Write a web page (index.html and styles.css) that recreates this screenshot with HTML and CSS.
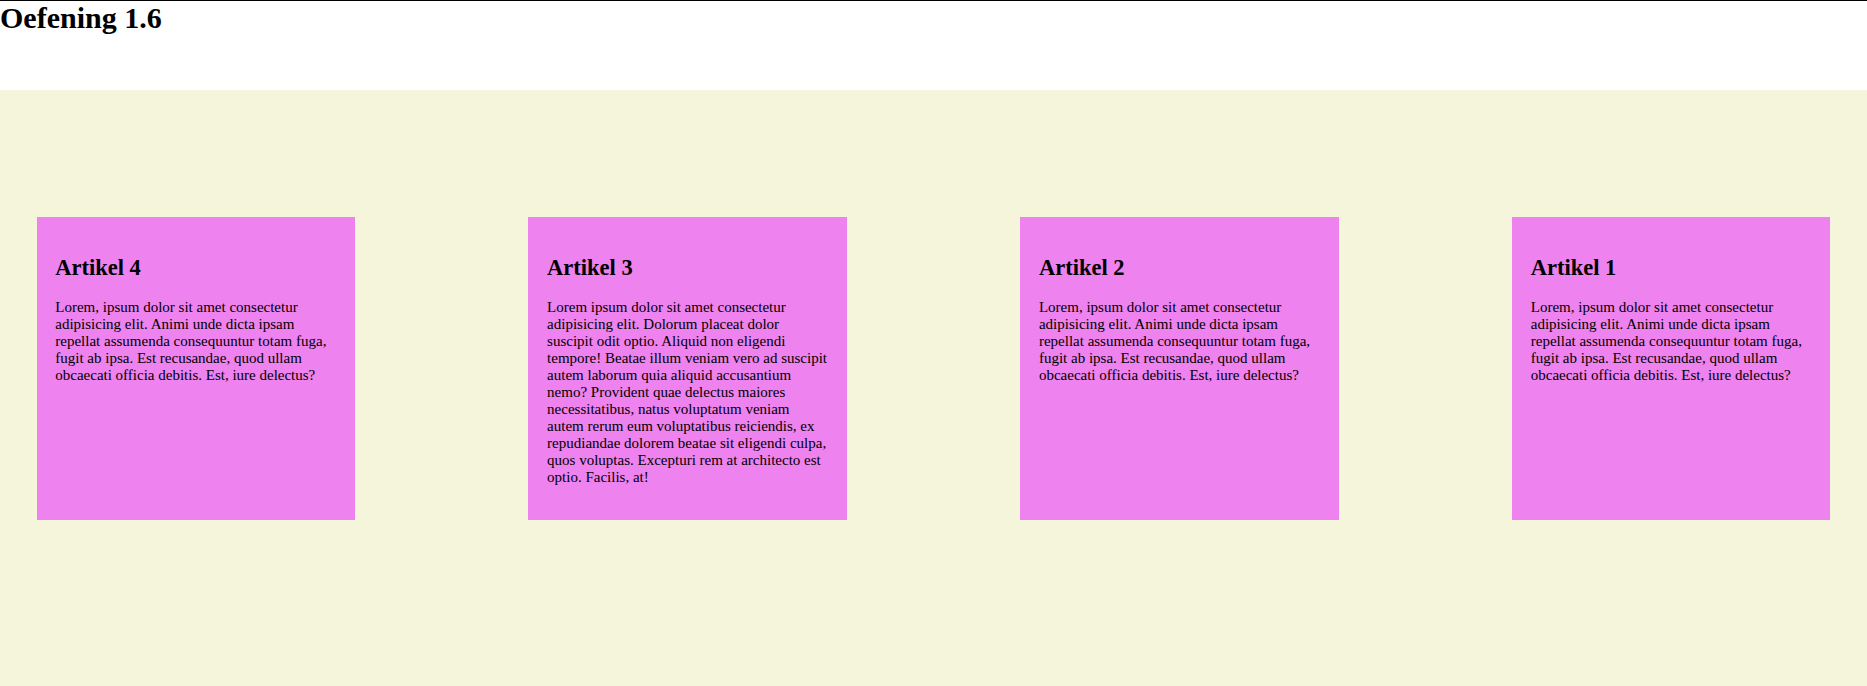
FILE: index.html
```html
<!DOCTYPE html>
<html lang="nl">
<head>
<meta charset="utf-8">
<title>Oefening 1.6</title>
<link rel="stylesheet" href="styles.css">
</head>
<body>
<header class="top">
  <h1 class="title">Oefening 1.6</h1>
</header>
<main class="articles">
  <article class="card">
    <h2>Artikel 1</h2>
    <p>Lorem, ipsum dolor sit amet consectetur adipisicing elit. Animi unde dicta ipsam repellat assumenda consequuntur totam fuga, fugit ab ipsa. Est recusandae, quod ullam obcaecati officia debitis. Est, iure delectus?</p>
  </article>
  <article class="card">
    <h2>Artikel 2</h2>
    <p>Lorem, ipsum dolor sit amet consectetur adipisicing elit. Animi unde dicta ipsam repellat assumenda consequuntur totam fuga, fugit ab ipsa. Est recusandae, quod ullam obcaecati officia debitis. Est, iure delectus?</p>
  </article>
  <article class="card">
    <h2>Artikel 3</h2>
    <p>Lorem ipsum dolor sit amet consectetur adipisicing elit. Dolorum placeat dolor suscipit odit optio. Aliquid non eligendi tempore! Beatae illum veniam vero ad suscipit autem laborum quia aliquid accusantium nemo? Provident quae delectus maiores necessitatibus, natus voluptatum veniam autem rerum eum voluptatibus reiciendis, ex repudiandae dolorem beatae sit eligendi culpa, quos voluptas. Excepturi rem at architecto est optio. Facilis, at!</p>
  </article>
  <article class="card">
    <h2>Artikel 4</h2>
    <p>Lorem, ipsum dolor sit amet consectetur adipisicing elit. Animi unde dicta ipsam repellat assumenda consequuntur totam fuga, fugit ab ipsa. Est recusandae, quod ullam obcaecati officia debitis. Est, iure delectus?</p>
  </article>
</main>
</body>
</html>
```
FILE: styles.css
```css
html, body {
  margin: 0;
  padding: 0;
}
body {
  font-family: "Liberation Serif", "Times New Roman", serif;
  font-size: 15px;
  color: #000;
  background: #fff;
}
.top {
  border-top: 1px solid #000;
  height: 89px;
}
.title {
  margin: 0;
  font-size: 30px;
  font-weight: bold;
}
.articles {
  background: #f5f5dc;
  min-height: calc(100vh - 90px);
  box-sizing: border-box;
  padding: 127px 36.5px 0;
  display: flex;
  flex-direction: row-reverse;
  justify-content: space-between;
  align-items: flex-start;
}
.card {
  background: #ee82ee;
  width: 318.5px;
  height: 303px;
  box-sizing: border-box;
  padding: 0 18.75px;
  overflow: hidden;
}
.card h2 {
  font-size: 22.5px;
  margin: 37.5px 0 18.7px;
}
.card p {
  margin: 0;
}
```
